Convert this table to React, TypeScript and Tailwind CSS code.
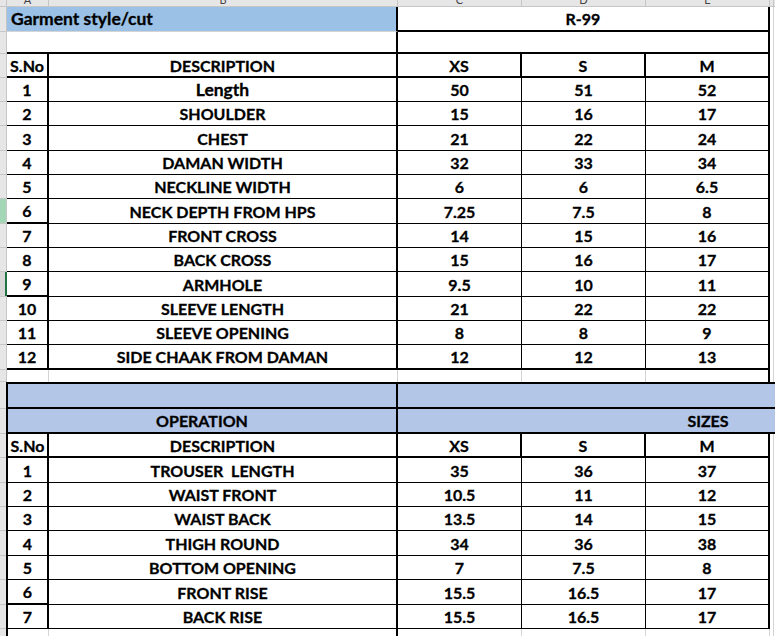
const upperRows = [
  ["1", "Length", "50", "51", "52"],
  ["2", "SHOULDER", "15", "16", "17"],
  ["3", "CHEST", "21", "22", "24"],
  ["4", "DAMAN WIDTH", "32", "33", "34"],
  ["5", "NECKLINE WIDTH", "6", "6", "6.5"],
  ["6", "NECK DEPTH FROM HPS", "7.25", "7.5", "8"],
  ["7", "FRONT CROSS", "14", "15", "16"],
  ["8", "BACK CROSS", "15", "16", "17"],
  ["9", "ARMHOLE", "9.5", "10", "11"],
  ["10", "SLEEVE LENGTH", "21", "22", "22"],
  ["11", "SLEEVE OPENING", "8", "8", "9"],
  ["12", "SIDE CHAAK FROM DAMAN", "12", "12", "13"],
];
const upperTall = [false, false, true, false, false, true, false, false, true, false, false, true];

const lowerRows = [
  ["1", "TROUSER  LENGTH", "35", "36", "37"],
  ["2", "WAIST FRONT", "10.5", "11", "12"],
  ["3", "WAIST BACK", "13.5", "14", "15"],
  ["4", "THIGH ROUND", "34", "36", "38"],
  ["5", "BOTTOM OPENING", "7", "7.5", "8"],
  ["6", "FRONT RISE", "15.5", "16.5", "17"],
  ["7", "BACK RISE", "15.5", "16.5", "17"],
];
const lowerTall = [true, false, false, true, false, true, false];

const c = "flex items-center justify-center shrink-0 h-full whitespace-pre pt-[1px]";

function RowHead({ tone = "" }: { tone?: string }) {
  return (
    <div
      className={`w-[7px] shrink-0 h-full border-r border-b border-[#c6c6c6] ${
        tone === "sel" ? "bg-[#a3d6b5]" : "bg-[#e6e6e6]"
      }`}
    />
  );
}

function RowHeadLow() {
  return <div className="w-[6px] shrink-0 h-full border-b border-[#c6c6c6] bg-[#e6e6e6]" />;
}

function Tail() {
  return (
    <>
      <div className="w-[4px] shrink-0 h-full border-r border-[#d4d4d4]" />
      <div className="flex-1 h-full" />
    </>
  );
}

export default function App() {
  return (
    <div className="w-[775px] h-[636px] overflow-hidden bg-white text-black font-['Lato','Liberation_Sans',sans-serif] font-bold text-[16px] leading-none [-webkit-text-stroke:0.3px_black]">
      {/* column letters, mostly scrolled out of view */}
      <div className="flex h-[7px] text-[11px] font-normal text-[#444] [-webkit-text-stroke:0]">
        <div className="w-[7px] shrink-0 bg-[#e6e6e6] border-r border-b border-[#c6c6c6]" />
        {[
          ["A", "w-[42px]"],
          ["B", "w-[349px]"],
          ["C", "w-[124px]"],
          ["D", "w-[124px]"],
          ["E", "w-[124px]"],
          ["", "w-[4px]"],
        ].map(([l, w], i) => (
          <div
            key={i}
            className={`${w} shrink-0 bg-[#e6e6e6] border-r border-b border-[#c6c6c6] flex justify-center items-start overflow-hidden`}
          >
            <span className="leading-none -mt-[6px]">{l}</span>
          </div>
        ))}
        <div className="flex-1 bg-[#e6e6e6] border-b border-[#c6c6c6]" />
      </div>

      {/* Garment style row */}
      <div className="flex h-[25px]">
        <RowHead />
        <div className="w-[391px] shrink-0 h-full bg-[#9bc2e6] border-r-2 border-b border-r-black border-b-[#d4d4d4] flex items-center pl-[4px] text-[17.5px]">
          Garment style/cut
        </div>
        <div className={`${c} w-[372px] border-r-2 border-b-2 border-black`}>R-99</div>
        <Tail />
      </div>

      {/* blank row */}
      <div className="flex h-[22px]">
        <RowHead />
        <div className="w-[391px] shrink-0 h-full border-r-2 border-b-2 border-black" />
        <div className="w-[372px] shrink-0 h-full border-r-2 border-b-2 border-black" />
        <Tail />
      </div>

      {/* header */}
      <div className="flex h-[24px]">
        <RowHead />
        <div className={`${c} w-[42px] border-r-2 border-b-2 border-black`}>S.No</div>
        <div className={`${c} w-[349px] border-r-2 border-b-2 border-black`}>DESCRIPTION</div>
        <div className={`${c} w-[124px] border-r-2 border-b-2 border-black`}>XS</div>
        <div className={`${c} w-[124px] border-r-2 border-b-2 border-black`}>S</div>
        <div className={`${c} w-[124px] border-r-2 border-b-2 border-black`}>M</div>
        <Tail />
      </div>

      {upperRows.map((r, i) => {
        const last = i === upperRows.length - 1;
        const bb = last ? "border-b-2" : "border-b";
        const aThick = i === 5 || i === 8 ? "border-b-2" : bb;
        return (
          <div key={i} className={`flex ${upperTall[i] ? "h-[25px]" : "h-[24px]"}`}>
            {i === 8 ? (
              <div className="w-[7px] shrink-0 h-full bg-[#d6d6d6] border-b border-[#c6c6c6] flex justify-end">
                <div className="w-[2px] h-full bg-[#217346]" />
              </div>
            ) : (
              <RowHead tone={i === 5 ? "sel" : ""} />
            )}
            <div className={`${c} w-[42px] border-r-2 ${aThick} border-black`}>{r[0]}</div>
            <div className={`${c} w-[349px] border-r-2 ${bb} border-black ${i === 0 ? "text-[17.5px]" : ""}`}>
              {r[1]}
            </div>
            <div className={`${c} w-[124px] border-r ${bb} border-black`}>{r[2]}</div>
            <div className={`${c} w-[124px] border-r ${bb} border-black`}>{r[3]}</div>
            <div className={`${c} w-[124px] border-r-2 ${bb} border-black`}>{r[4]}</div>
            <Tail />
          </div>
        );
      })}

      {/* spacer row */}
      <div className="flex h-[12px]">
        <RowHead />
        <div className="w-[42px] shrink-0 h-full border-r border-[#d4d4d4]" />
        <div className="w-[349px] shrink-0 h-full border-r border-[#d4d4d4]" />
        <div className="w-[124px] shrink-0 h-full border-r border-[#d4d4d4]" />
        <div className="w-[124px] shrink-0 h-full border-r border-[#d4d4d4]" />
        <div className="w-[124px] shrink-0 h-full border-r-2 border-black" />
        <Tail />
      </div>

      {/* blue band */}
      <div className="flex h-[27px]">
        <div className="w-[6px] shrink-0 h-full border-b border-[#c6c6c6] bg-[#e6e6e6]" />
        <div className="w-[392px] shrink-0 h-full bg-[#b4c6e7] border-l-2 border-r-2 border-t-2 border-b-2 border-black" />
        <div className="flex-1 h-full bg-[#b4c6e7] border-t-2 border-b-2 border-black" />
      </div>

      {/* operation row */}
      <div className="flex h-[25px]">
        <RowHeadLow />
        <div className={`${c} w-[392px] bg-[#b4c6e7] border-l-2 border-r-2 border-b-2 border-black`}>
          OPERATION
        </div>
        <div className="flex-1 h-full bg-[#b4c6e7] border-b-2 border-black flex">
          <div className="w-[248px] shrink-0" />
          <div className={`${c} w-[124px]`}>SIZES</div>
        </div>
      </div>

      {/* lower header */}
      <div className="flex h-[24px]">
        <RowHeadLow />
        <div className={`${c} w-[43px] border-l-2 border-r-2 border-b-2 border-black`}>S.No</div>
        <div className={`${c} w-[349px] border-r-2 border-b-2 border-black`}>DESCRIPTION</div>
        <div className={`${c} w-[124px] border-r-2 border-b-2 border-black`}>XS</div>
        <div className={`${c} w-[124px] border-r-2 border-b-2 border-black`}>S</div>
        <div className={`${c} w-[124px] border-r-2 border-b-2 border-black`}>M</div>
        <Tail />
      </div>

      {lowerRows.map((r, i) => {
        const aThick = i === 5 ? "border-b-2" : "border-b";
        return (
          <div key={i} className={`flex ${lowerTall[i] ? "h-[25px]" : "h-[24px]"}`}>
            <RowHeadLow />
            <div className={`${c} w-[43px] border-l-2 border-r-2 ${aThick} border-black`}>{r[0]}</div>
            <div className={`${c} w-[349px] border-r-2 border-b border-black`}>{r[1]}</div>
            <div className={`${c} w-[124px] border-r border-b border-black`}>{r[2]}</div>
            <div className={`${c} w-[124px] border-r border-b border-black`}>{r[3]}</div>
            <div className={`${c} w-[124px] border-r-2 border-b border-black`}>{r[4]}</div>
            <Tail />
          </div>
        );
      })}

      {/* trailing row */}
      <div className="flex h-[12px]">
        <RowHeadLow />
        <div className="w-[43px] shrink-0 h-full border-l-2 border-black border-r border-r-[#d4d4d4]" />
        <div className="w-[349px] shrink-0 h-full border-r-2 border-black" />
        <div className="w-[124px] shrink-0 h-full border-r border-[#d4d4d4]" />
        <div className="w-[124px] shrink-0 h-full border-r border-[#d4d4d4]" />
        <div className="w-[124px] shrink-0 h-full border-r border-[#d4d4d4]" />
        <Tail />
      </div>
    </div>
  );
}
